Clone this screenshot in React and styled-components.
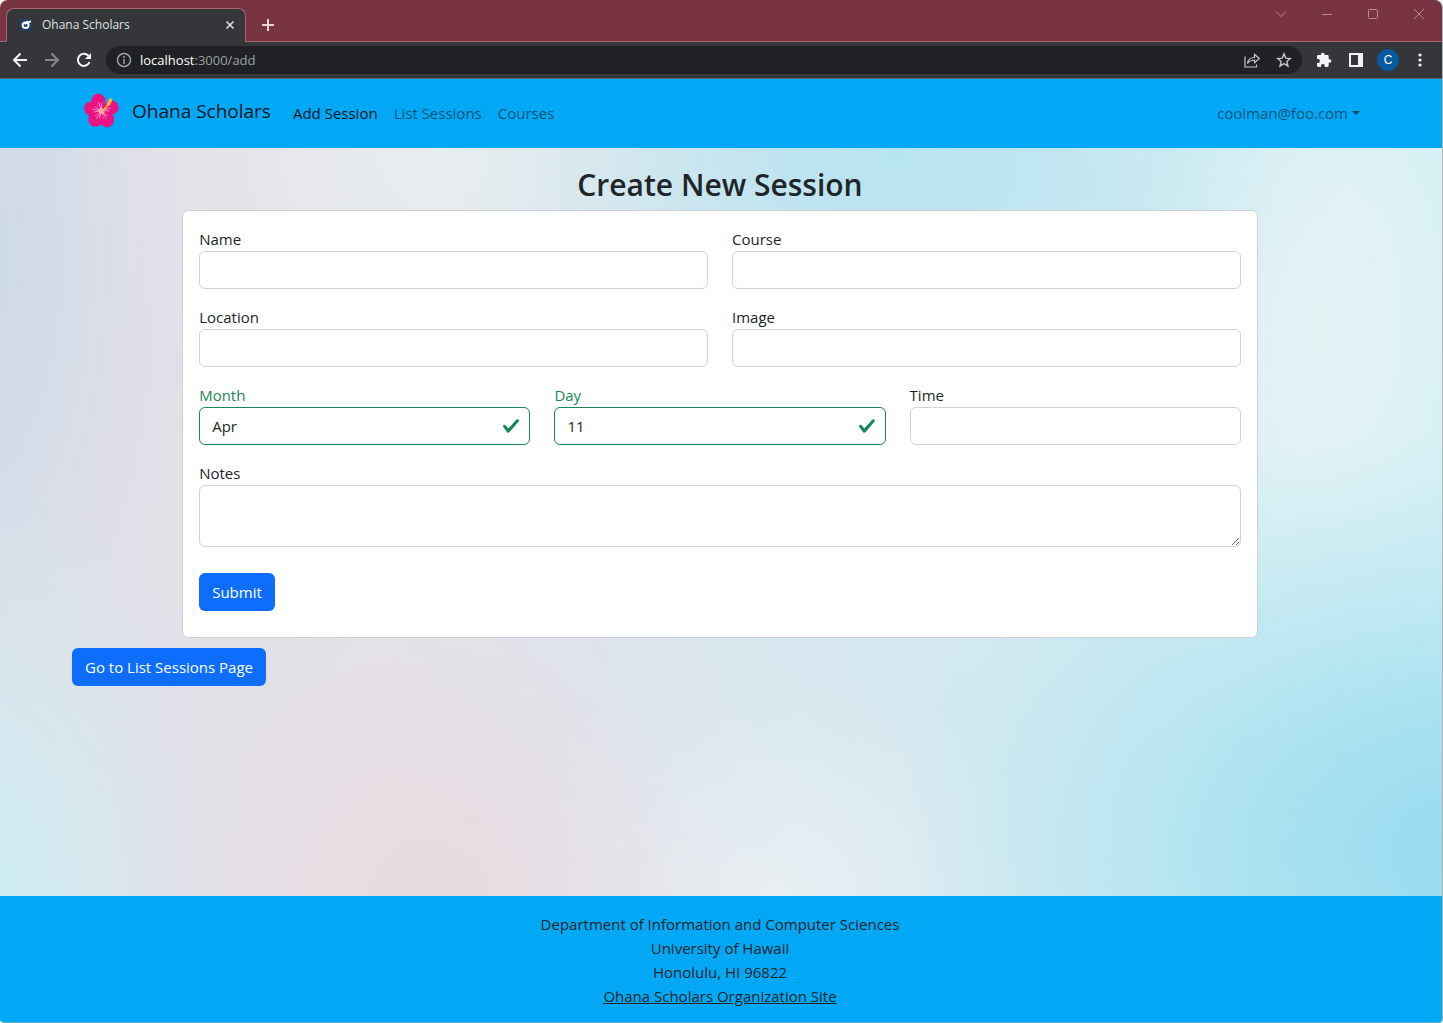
import React from "react";
import styled, { createGlobalStyle } from "styled-components";

const GlobalStyle = createGlobalStyle`
  *, *::before, *::after { box-sizing: border-box; }
  body {
    margin: 0;
    background: #f4f4f4;
    color: #212529;
    font-family: "Open Sans", "Noto Sans", sans-serif;
    font-size: 15px;
    line-height: 24px;
  }
`;

const BrowserWindow = styled.div`
  display: flex;
  flex-direction: column;
  min-height: 100vh;
  border-right: 1px solid #a9b4ba;
  border-bottom: 1px solid #5fa9cc;
  border-radius: 8px 8px 4px 4px;
  overflow: hidden;
`;

const TabStrip = styled.header`
  display: flex;
  align-items: flex-end;
  height: 42px;
  padding-left: 6px;
  background: linear-gradient(#a86670, #a86670) bottom / 100% 1px no-repeat #783541;
`;

const Tab = styled.div`
  display: flex;
  align-items: center;
  gap: 10px;
  width: 240px;
  height: 34px;
  padding: 0 8px 2px 13px;
  border: 1px solid #a86670;
  border-bottom: 0;
  border-radius: 8px 8px 0 0;
  background: #35363a;
  color: #dfe1e5;
  font-size: 12px;
`;

const TabTitle = styled.span`
  flex: 1;
  font-size: 12px;
`;

const IconButton = styled.button`
  display: flex;
  align-items: center;
  justify-content: center;
  width: ${(p) => p.$width || 32}px;
  height: ${(p) => p.$height || 28}px;
  padding: 0;
  border: 0;
  background: none;
  color: ${(p) => p.$color || "#f1f3f4"};
`;

const WindowControls = styled.div`
  display: flex;
  align-self: flex-start;
  margin-left: auto;
`;

const Toolbar = styled.div`
  display: flex;
  align-items: center;
  height: 37px;
  padding: 0 6px 0 4px;
  border-bottom: 1px solid #5d6269;
  background: #35363a;
`;

const AddressBar = styled.div`
  display: flex;
  flex: 1;
  align-items: center;
  height: 28px;
  margin: 0 6px;
  padding: 0 2px 0 10px;
  border-radius: 14px;
  background: #202124;
`;

const Address = styled.span`
  flex: 1;
  padding-left: 8px;
  color: #9aa0a6;
  font-size: 13px;
`;

const Host = styled.span`
  color: #ffffff;
`;

const Avatar = styled.span`
  width: 22px;
  height: 22px;
  border-radius: 50%;
  background: #05599f;
  color: #ffffff;
  font-size: 12px;
  line-height: 22px;
`;

const Page = styled.div`
  display: flex;
  flex: 1;
  flex-direction: column;
`;

const Navbar = styled.nav`
  padding-right: 2px;
  background: #00a8f5;
`;

const Container = styled.div`
  width: 100%;
  max-width: 1320px;
  margin: 0 auto;
  padding: 0 12px;
`;

const NavRow = styled(Container)`
  display: flex;
  align-items: center;
  height: 69px;
  padding-bottom: 2px;
`;

const Brand = styled.a`
  display: flex;
  align-items: center;
  gap: 12px;
  margin-right: 14px;
  padding: 0 0 4px 12px;
  color: rgba(0, 0, 0, 0.9);
  font-size: 19px;
  text-decoration: none;
`;

const NavLink = styled.a`
  padding: 8px;
  color: ${(p) => (p.$active ? "rgba(0, 0, 0, 0.9)" : "rgba(0, 0, 0, 0.55)")};
  text-decoration: none;
`;

const UserMenu = styled.button`
  display: flex;
  align-items: center;
  gap: 4px;
  margin-left: auto;
  padding: 8px;
  border: 0;
  background: none;
  color: rgba(0, 0, 0, 0.55);
  font: inherit;
`;

const Main = styled.main`
  flex: 1;
  padding: 18px 2px 16px 0;
  background:
    radial-gradient(ellipse 32% 60% at 62% 0%, rgba(180, 227, 241, 0.9) 0%, rgba(182, 228, 241, 0.75) 25%, rgba(186, 229, 241, 0.36) 60%, rgba(190, 230, 242, 0.1) 85%, rgba(190, 230, 242, 0) 100%),
    radial-gradient(ellipse 40% 56% at 102% 94%, rgba(148, 217, 239, 0.95) 0%, rgba(154, 220, 239, 0.78) 30%, rgba(162, 222, 240, 0.4) 60%, rgba(170, 225, 240, 0.1) 87%, rgba(170, 225, 240, 0) 100%),
    radial-gradient(ellipse 18% 60% at 91% 22%, rgba(232, 243, 245, 0.95) 0%, rgba(230, 243, 245, 0.75) 30%, rgba(225, 242, 245, 0.3) 65%, rgba(220, 242, 245, 0) 100%),
    radial-gradient(ellipse 26% 54% at 30% 102%, rgba(233, 218, 222, 0.95) 0%, rgba(232, 220, 225, 0.65) 35%, rgba(230, 223, 229, 0.22) 70%, rgba(230, 224, 230, 0) 100%),
    radial-gradient(ellipse 22% 60% at -3% 102%, rgba(200, 240, 244, 0.95) 0%, rgba(208, 236, 242, 0.75) 35%, rgba(214, 232, 240, 0.3) 70%, rgba(218, 230, 238, 0) 100%),
    radial-gradient(ellipse 16% 70% at -3% 15%, rgba(200, 216, 230, 0.9) 0%, rgba(206, 216, 230, 0.65) 40%, rgba(214, 219, 231, 0.25) 75%, rgba(218, 220, 232, 0) 100%),
    radial-gradient(ellipse 24% 44% at 31% 0%, rgba(234, 239, 240, 0.9) 0%, rgba(232, 237, 239, 0.55) 45%, rgba(230, 232, 236, 0) 100%),
    radial-gradient(ellipse 20% 34% at 53% 102%, rgba(235, 240, 243, 0.95) 0%, rgba(232, 239, 243, 0.5) 50%, rgba(228, 238, 243, 0) 100%),
    linear-gradient(98deg, #dde1ea 0%, #e1e0e7 14%, #e3e2e8 30%, #d9e6ee 52%, #cdebf2 80%, #d0f0f5 100%);
`;

const Title = styled.h1`
  margin: 0 0 6px;
  font-size: 30px;
  font-weight: 600;
  line-height: 38px;
  text-align: center;
`;

const Card = styled.form`
  width: 83%;
  max-width: 1076px;
  margin: 0 auto;
  padding: 16px;
  border: 1px solid #cdd1d4;
  border-radius: 6px;
  background: #ffffff;
`;

const FieldRow = styled.div`
  display: grid;
  grid-template-columns: repeat(${(p) => p.$columns || 1}, 1fr);
  gap: 24px;
  margin-bottom: 16px;
`;

const Label = styled.label`
  display: block;
  color: ${(p) => (p.$valid ? "#198754" : "#212529")};
`;

const Control = styled.div`
  display: flex;
  align-items: center;
  height: 38px;
  padding-right: 9px;
  border: 1px solid ${(p) => (p.$valid ? "#198754" : "#ced4da")};
  border-radius: 6px;
  background: #ffffff;
`;

const Input = styled.input`
  flex: 1;
  min-width: 0;
  height: 36px;
  padding: 0 12px;
  border: 0;
  outline: 0;
  background: none;
  color: #212529;
  font: inherit;
`;

const TextArea = styled.textarea`
  display: block;
  width: 100%;
  height: 62px;
  padding: 6px 12px;
  border: 1px solid #ced4da;
  border-radius: 6px;
  font: inherit;
  resize: vertical;
`;

const primaryButton = `
  height: 38px;
  padding: 7px 13px;
  border: 0;
  border-radius: 6px;
  background: #0d6efd;
  color: #ffffff;
  font: inherit;
`;

const SubmitButton = styled.button`
  ${primaryButton}
  display: block;
  margin: 26px 0 10px;
`;

const LinkButton = styled.a`
  ${primaryButton}
  display: inline-block;
  margin-top: 10px;
  text-decoration: none;
`;

const Footer = styled.footer`
  padding: 16px 2px 14px 0;
  background: #00a8f5;
  text-align: center;
`;

const FooterLink = styled.a`
  color: #212529;
`;

const petals = [-108, -20, 58, 124, 192];

const Hibiscus = () => (
  <svg width="36" height="38" viewBox="0 0 36 38" aria-hidden="true">
    <g transform="translate(17.500 19)">
      {petals.map((angle) => (
        <g key={angle} transform={`rotate(${angle})`}>
          <path
            fill="#ee1181"
            d="M-1 0C3-3 6-7 10-7.300c1.500-.2 2.500.3 3.500 1.300 1.500-.2 2.500 1 2.500 2.500C17.500-2.800 18-1.500 17.300-.3 18.300.8 18 2.300 16.800 3c.2 1.500-1 2.700-2.500 2.800C13.500 7 12 7.500 10.500 7.200 7 7 3 3-1 0Z"
          />
          <path
            d="M1 0h8M1 0l6-2.500M1 0l6 2.500"
            fill="none"
            stroke="#f890c4"
            strokeWidth="0.9"
            strokeLinecap="round"
          />
        </g>
      ))}
      <circle r="3" fill="#f8a9cf" />
      <path d="m0 2 7-9" stroke="#f6ae3a" strokeWidth="2" strokeLinecap="round" />
      <path d="m7-7 2-4" stroke="#f6b545" strokeWidth="3.600" strokeLinecap="round" />
    </g>
  </svg>
);

const Favicon = () => (
  <svg width="12" height="12" viewBox="0 0 12 12" aria-hidden="true">
    <path d="M0 0h12v12H0z" fill="#223c68" />
    <path d="M11 2.500 8 3.200" stroke="#fff" strokeWidth="1.800" />
    <ellipse cx="5.600" cy="6.300" rx="3" ry="2.700" fill="none" stroke="#fff" strokeWidth="2" />
    <path d="M5 5.500 7.500 2" stroke="#fff" strokeWidth="1.300" />
  </svg>
);

const Icon = ({ size = 16, stroke = 2, children }) => (
  <svg
    width={size}
    height={size}
    viewBox="0 0 16 16"
    fill="none"
    stroke="currentColor"
    strokeWidth={stroke}
    aria-hidden="true"
  >
    {children}
  </svg>
);

const CheckMark = () => (
  <svg width="18" height="18" viewBox="0 0 8 8" aria-hidden="true">
    <path
      fill="#198754"
      d="M2.300 6.730.6 4.530c-.4-1.040.46-1.400 1.100-.8l1.100 1.400 3.400-3.800c.6-.63 1.600-.27 1.200.7l-4 4.600c-.43.5-.8.4-1.100.1z"
    />
  </svg>
);

const Field = ({ id, label, value = "", valid }) => (
  <div>
    <Label htmlFor={id} $valid={valid}>{label}</Label>
    <Control $valid={valid}>
      <Input id={id} type="text" defaultValue={value} />
      {valid && <CheckMark />}
    </Control>
  </div>
);

const BrowserChrome = () => (
  <>
    <TabStrip>
      <Tab>
        <Favicon />
        <TabTitle>Ohana Scholars</TabTitle>
        <IconButton $width={14} $height={16} $color="#dfe1e5" aria-label="Close tab">
          <Icon size={14} stroke={1.8}><path d="m4 4 8 8m0-8-8 8" /></Icon>
        </IconButton>
      </Tab>
      <IconButton $width={44} $height={34} $color="#e6d7d9" aria-label="New tab">
        <Icon><path d="M8 2v12M2 8h12" /></Icon>
      </IconButton>
      <WindowControls>
        <IconButton $width={46} $color="#b98a92" aria-label="Search tabs">
          <Icon stroke={1}><path d="m3 5.500 5 5 5-5" /></Icon>
        </IconButton>
        <IconButton $width={46} $color="#b98a92" aria-label="Minimize">
          <Icon stroke={1}><path d="M3 8.500h10" /></Icon>
        </IconButton>
        <IconButton $width={46} $color="#b98a92" aria-label="Maximize">
          <Icon stroke={1}><rect x="3.500" y="3.500" width="9" height="9" rx="1" /></Icon>
        </IconButton>
        <IconButton $width={46} $color="#b98a92" aria-label="Close window">
          <Icon stroke={1}><path d="m3 3 10 10m0-10L3 13" /></Icon>
        </IconButton>
      </WindowControls>
    </TabStrip>
    <Toolbar>
      <IconButton aria-label="Back">
        <Icon><path d="M15 8H2m6.500-6.500L2 8l6.500 6.500" /></Icon>
      </IconButton>
      <IconButton $color="#85868a" aria-label="Forward">
        <Icon><path d="M1 8h13M7.500 1.500 14 8l-6.500 6.500" /></Icon>
      </IconButton>
      <IconButton aria-label="Reload">
        <Icon>
          <path d="M13.500 10A6 6 0 1 1 12.300 3.800L14 5.500" />
          <path d="M15 1v6H9Z" fill="currentColor" stroke="none" />
        </Icon>
      </IconButton>
      <AddressBar>
        <IconButton $width={16} $color="#9aa0a6" aria-label="Site information">
          <Icon stroke={1.5}>
            <circle cx="8" cy="8" r="6.500" />
            <path d="M8 7v5M8 4v2" />
          </Icon>
        </IconButton>
        <Address><Host>localhost</Host>:3000/add</Address>
        <IconButton $color="#c4c7cb" aria-label="Share">
          <Icon stroke={1.2}>
            <path d="M1 4.500V15h11.500v-2.500" />
            <path d="M3.500 11.500C4 8 6.300 5.500 10.500 5.500V2.300L15.300 6.500l-4.800 4.200V8c-3 0-5.200 1-7 3.500Z" />
          </Icon>
        </IconButton>
        <IconButton $color="#c4c7cb" aria-label="Bookmark">
          <Icon stroke={1.4}>
            <path d="m8 1.800 1.700 4.300 4.700.4-3.600 3 1.200 4.600-4-2.500-4 2.500 1.200-4.600-3.600-3 4.700-.4Z" />
          </Icon>
        </IconButton>
      </AddressBar>
      <IconButton aria-label="Extensions">
        <Icon>
          <path
            d="M13.700 7.300h-1V4.500c0-.8-.6-1.400-1.400-1.400H8.500v-1a1.800 1.800 0 0 0-3.500 0v1H2.300C1.500 3.100 1 3.700 1 4.500v2.600h1a1.900 1.900 0 0 1 0 3.800H1v2.700c0 .8.500 1.400 1.300 1.400H5v-1a1.900 1.900 0 0 1 3.800 0v1h2.500c.8 0 1.400-.6 1.400-1.400v-2.800h1a1.750 1.750 0 0 0 0-3.500Z"
            fill="currentColor"
            stroke="none"
          />
        </Icon>
      </IconButton>
      <IconButton aria-label="Side panel">
        <Icon><path d="M1 1h14v14H1zM3 3v10h7V3z" fill="currentColor" fillRule="evenodd" stroke="none" /></Icon>
      </IconButton>
      <IconButton aria-label="Profile"><Avatar>C</Avatar></IconButton>
      <IconButton aria-label="Menu">
        <Icon>
          <g fill="currentColor" stroke="none">
            <circle cx="8" cy="3" r="1.600" />
            <circle cx="8" cy="8" r="1.600" />
            <circle cx="8" cy="13" r="1.600" />
          </g>
        </Icon>
      </IconButton>
    </Toolbar>
  </>
);

export default function App() {
  return (
    <BrowserWindow>
      <GlobalStyle />
      <BrowserChrome />
      <Page>
        <Navbar>
          <NavRow>
            <Brand href="#home"><Hibiscus />Ohana Scholars</Brand>
            <NavLink href="#add" $active>Add Session</NavLink>
            <NavLink href="#list">List Sessions</NavLink>
            <NavLink href="#courses">Courses</NavLink>
            <UserMenu type="button">
              coolman@foo.com
              <svg width="8" height="4" viewBox="0 0 8 4" aria-hidden="true">
                <path d="M0 0h8L4 4z" fill="currentColor" />
              </svg>
            </UserMenu>
          </NavRow>
        </Navbar>
        <Main>
          <Container>
            <Title>Create New Session</Title>
            <Card>
              <FieldRow $columns={2}>
                <Field id="name" label="Name" />
                <Field id="course" label="Course" />
              </FieldRow>
              <FieldRow $columns={2}>
                <Field id="location" label="Location" />
                <Field id="image" label="Image" />
              </FieldRow>
              <FieldRow $columns={3}>
                <Field id="month" label="Month" value="Apr" valid />
                <Field id="day" label="Day" value="11" valid />
                <Field id="time" label="Time" />
              </FieldRow>
              <div>
                <Label htmlFor="notes">Notes</Label>
                <TextArea id="notes" />
              </div>
              <SubmitButton type="submit">Submit</SubmitButton>
            </Card>
            <LinkButton href="#list">Go to List Sessions Page</LinkButton>
          </Container>
        </Main>
        <Footer>
          Department of Information and Computer Sciences
          <br />
          University of Hawaii
          <br />
          Honolulu, HI 96822
          <br />
          <FooterLink href="#organization">Ohana Scholars Organization Site</FooterLink>
        </Footer>
      </Page>
    </BrowserWindow>
  );
}
